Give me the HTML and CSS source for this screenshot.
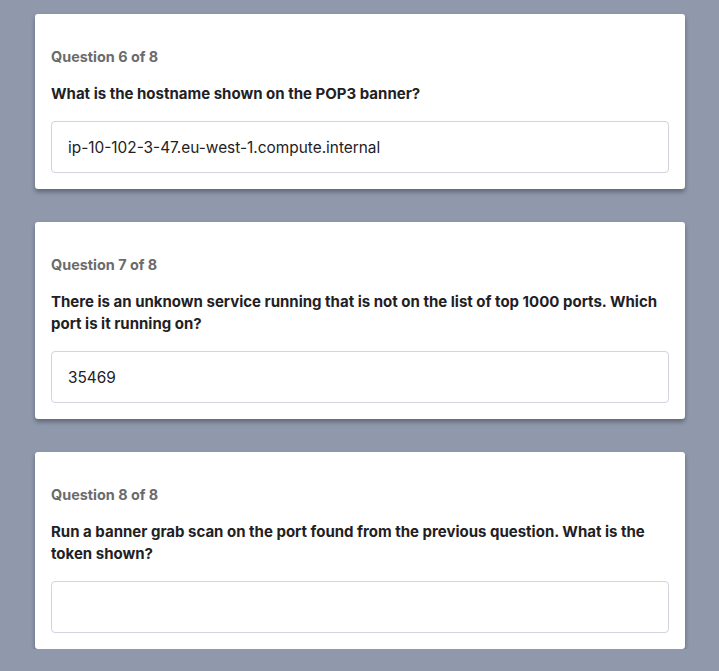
FILE: index.html
```html
<!DOCTYPE html>
<html>
<head>
<meta charset="utf-8">
<link rel="stylesheet" href="styles.css">
</head>
<body>
<div class="list">
  <section class="card">
    <div class="label">Question 6 of 8</div>
    <div class="question">What is the hostname shown on the POP3 banner?</div>
    <div class="answer">ip-10-102-3-47.eu-west-1.compute.internal</div>
  </section>
  <section class="card">
    <div class="label">Question 7 of 8</div>
    <div class="question">There is an unknown service running that is not on the list of top 1000 ports. Which port is it running on?</div>
    <div class="answer">35469</div>
  </section>
  <section class="card">
    <div class="label">Question 8 of 8</div>
    <div class="question">Run a banner grab scan on the port found from the previous question. What is the token shown?</div>
    <div class="answer"></div>
  </section>
</div>
</body>
</html>
```
FILE: styles.css
```css
html, body {
  margin: 0;
  padding: 0;
  background: #8f99ab;
  font-family: Inter, "Noto Sans", sans-serif;
}
.list {
  display: flex;
  flex-direction: column;
  gap: 33px;
  padding: 14px 0 0 35px;
  width: 650px;
}
.card {
  background: #fff;
  border-radius: 3px;
  box-shadow: 0 3px 4px rgba(40, 45, 60, 0.45);
  padding: 33px 16px 16px;
  display: flex;
  flex-direction: column;
}
.label {
  font-size: 14.4px;
  line-height: 20px;
  font-weight: 700;
  color: #6b6b6b;
  margin-bottom: 16px;
}
.question {
  font-size: 15px;
  line-height: 22px;
  font-weight: 700;
  color: #1f2124;
  margin-bottom: 16px;
}
.answer {
  box-sizing: border-box;
  height: 52px;
  border: 1px solid #d2d3dc;
  border-radius: 4px;
  padding: 0 16px;
  display: flex;
  align-items: center;
  font-size: 15.4px;
  color: #1f2124;
}
```
